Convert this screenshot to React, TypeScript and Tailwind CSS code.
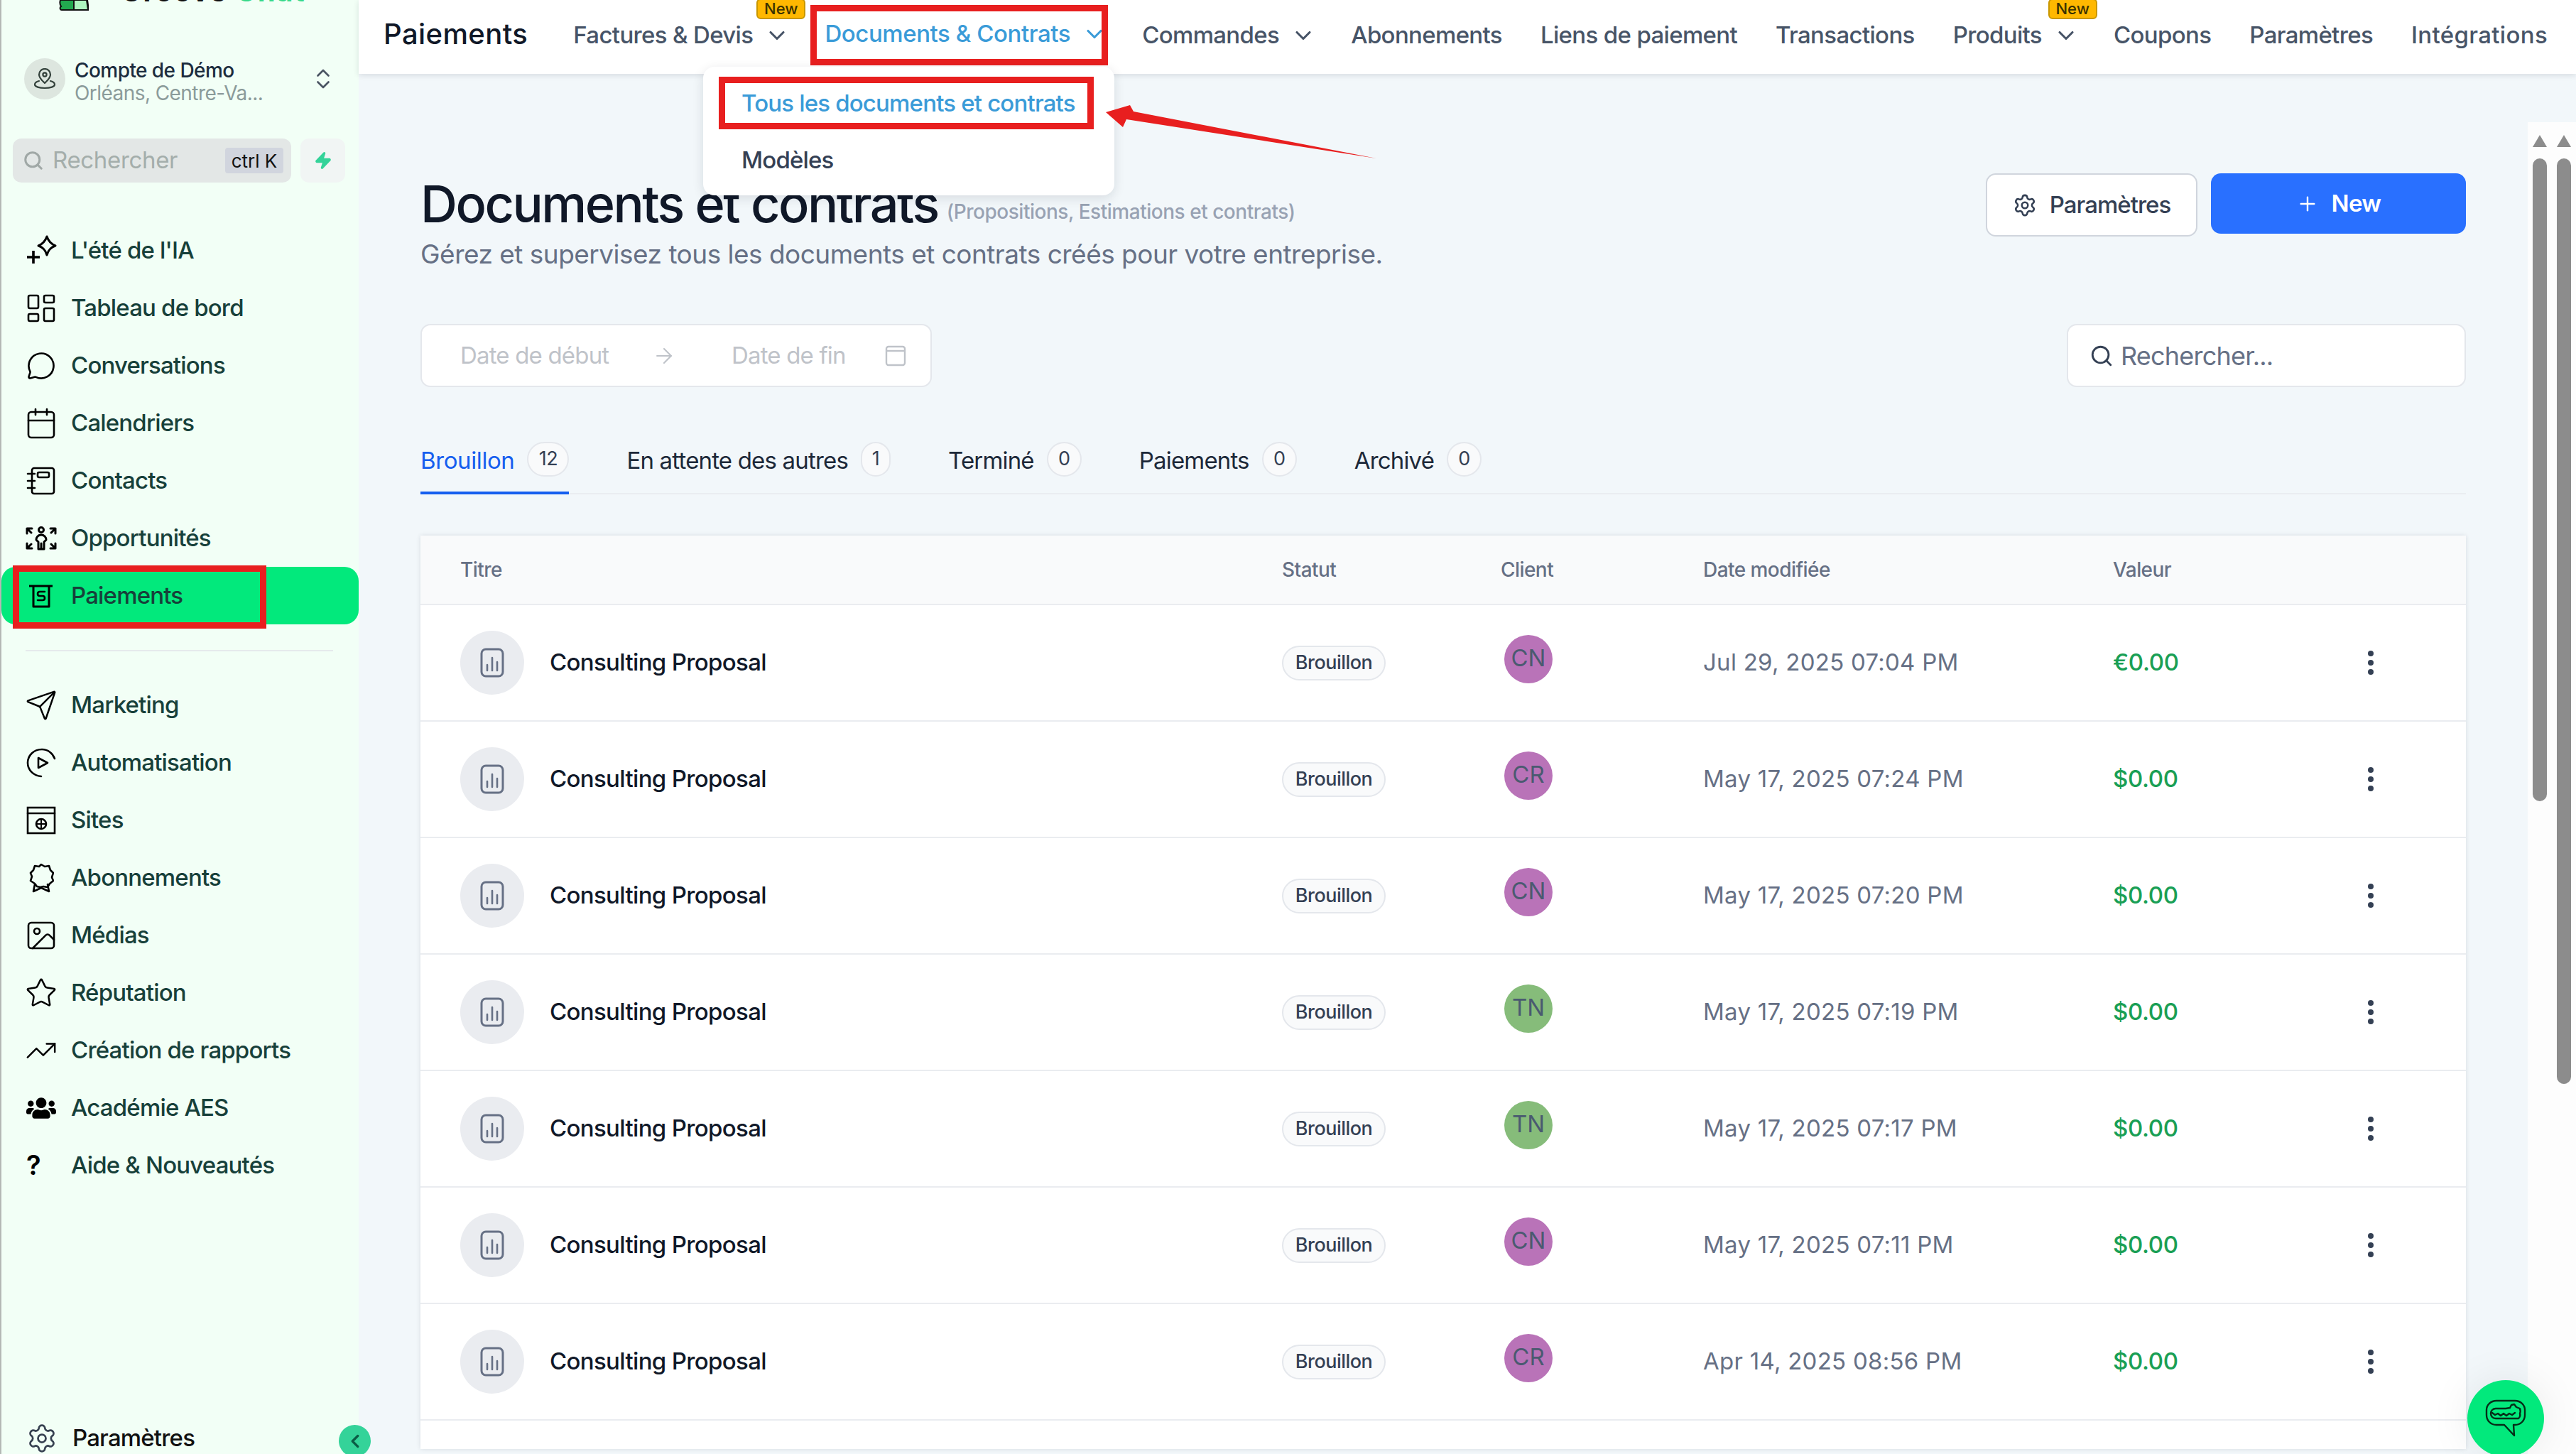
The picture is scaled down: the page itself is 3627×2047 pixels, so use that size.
import { ArrowRight, ChevronDown, ChevronLeft, ChevronsUpDown, LayoutDashboard, MessageCircle, Calendar, Send, Image, Star, TrendingUp, Settings, Plus, Search, Zap } from "lucide-react";
import { FaUsers } from "react-icons/fa";
import type { ReactNode } from "react";

const stroke = { fill: "none", stroke: "#000", strokeWidth: 2.6, strokeLinecap: "round", strokeLinejoin: "round" } as const;

const Sparkle = () => (
  <svg width="46" height="44" viewBox="0 0 46 44" {...stroke} strokeWidth={3}>
    <path d="M31 2c2 6 5 10 12 13-7 2-10 6-12 13-2-7-5-11-12-13 7-3 10-7 12-13z" />
    <path d="M12 22v18M3 31h18" strokeWidth={3.6} strokeLinecap="butt" />
  </svg>
);
const Notebook = () => (
  <svg width="42" height="42" viewBox="0 0 42 42" {...stroke}>
    <rect x="8" y="3" width="31" height="36" rx="3" />
    <rect x="16" y="9" width="16" height="7" rx="2" />
    <path d="M2 11h10M2 21h10M2 31h10" />
  </svg>
);
const Opportunity = () => (
  <svg width="44" height="34" viewBox="0 0 44 34" {...stroke} strokeWidth={3}>
    <circle cx="22" cy="5" r="3.5" />
    <path d="M22 32v-8M15 19c0-4 3-7 7-7s7 3 7 7l-3 3v10h-8V22z" />
    <path d="M2 10V3h7M2 3l6 6M42 10V3h-7M42 3l-6 6M2 24v7h7M2 31l6-6M42 24v7h-7M42 31l-6-6" />
  </svg>
);
const Money = () => (
  <svg width="36" height="34" viewBox="0 0 36 34" {...stroke} strokeWidth={3}>
    <path d="M1 3h33M7 3v29h22V3" strokeLinecap="butt" />
    <path d="M23 11h-7c-4 0-4 6 0 6h4c4 0 4 6 0 6h-7" strokeWidth={2.6} />
  </svg>
);
const Automation = () => (
  <svg width="42" height="42" viewBox="0 0 42 42" {...stroke}>
    <path d="M40 15C37 7 30 2 22 2 10 2 2 11 2 21c0 10 8 18 19 19" />
    <path d="M17 14l13 7-13 7z" />
  </svg>
);
const Site = () => (
  <svg width="42" height="42" viewBox="0 0 42 42" {...stroke}>
    <rect x="2" y="3" width="38" height="36" strokeLinejoin="miter" />
    <path d="M2 11h38" />
    <circle cx="21" cy="26" r="7" />
    <path d="M14 26h14M21 19v14" strokeWidth={2} />
  </svg>
);
const Ribbon = () => (
  <svg width="36" height="42" viewBox="0 0 36 42" {...stroke}>
    <path d="M18 2l5 3 6-1 2 6 4 4-2 6 2 5-5 4-3 5-6-1-4 1-5-1-3-4-6-4 2-6-2-5 4-4 2-6 6 1z" />
    <path d="M9 30l-2 10 11-5 11 5-2-10" />
  </svg>
);
const Gator = () => (
  <svg width="58" height="54" viewBox="0 0 58 54" fill="none" stroke="#062e18" strokeWidth={2.4} strokeLinecap="round" strokeLinejoin="round">
    <path d="M16 2h26c8 0 14 6 14 13v7c0 8-6 14-14 14h-2l1 15-14-15H16C8 36 2 30 2 22v-7C2 8 8 2 16 2z" />
    <path d="M8 20c0-4 3-7 7-7h14l6-1 2-4 4-1 3 4 5 2c1 3 1 5 0 7 1 3 0 5-2 7H15c-4 0-7-3-7-7z" />
    <path d="M10 19l4 3 4-2 4 3 4-3 4 3 4-3 4 2 4-3" />
  </svg>
);
const PinRing = () => (
  <svg width="32" height="30" viewBox="0 0 32 30" fill="none" stroke="#33413b" strokeWidth="2.2" strokeLinecap="round" strokeLinejoin="round">
    <path d="M16 21c-4-4-8-7-8-12a8 8 0 0 1 16 0c0 5-4 8-8 12z" />
    <circle cx="16" cy="9" r="2.6" />
    <path d="M8 18c-4 1-6 3-6 5 0 3 6 5 14 5s14-2 14-5c0-2-2-4-6-5" />
  </svg>
);

type NavRow = { label: string; icon: ReactNode; active?: boolean };

const topNav: NavRow[] = [
  { label: "L'été de l'IA", icon: <Sparkle /> },
  { label: "Tableau de bord", icon: <LayoutDashboard size={48} strokeWidth={1.3} color="#000" /> },
  { label: "Conversations", icon: <MessageCircle size={42} strokeWidth={1.5} color="#000" /> },
  { label: "Calendriers", icon: <Calendar size={48} strokeWidth={1.3} color="#000" /> },
  { label: "Contacts", icon: <Notebook /> },
  { label: "Opportunités", icon: <Opportunity /> },
  { label: "Paiements", icon: <Money />, active: true },
];

const bottomNav: NavRow[] = [
  { label: "Marketing", icon: <Send size={46} strokeWidth={1.3} color="#000" /> },
  { label: "Automatisation", icon: <Automation /> },
  { label: "Sites", icon: <Site /> },
  { label: "Abonnements", icon: <Ribbon /> },
  { label: "Médias", icon: <Image size={48} strokeWidth={1.3} color="#000" /> },
  { label: "Réputation", icon: <Star size={46} strokeWidth={1.3} color="#000" /> },
  { label: "Création de rapports", icon: <TrendingUp size={46} strokeWidth={1.3} color="#000" /> },
  { label: "Académie AES", icon: <FaUsers size={42} color="#000" /> },
  { label: "Aide & Nouveautés", icon: <span className="w-full text-[38px] font-semibold text-black">?</span> },
];

const SideItem = ({ item }: { item: NavRow }) => (
  <div className={`relative flex h-[81px] items-center gap-[21px] rounded-[20px] pl-[35px] ${item.active ? "bg-[#02e97c]" : ""}`}>
    <span className="flex w-[42px] shrink-0 items-center justify-center [&>svg]:shrink-0">{item.icon}</span>
    <span className="text-[33px] font-medium tracking-[-0.025em] text-[#17403a]">{item.label}</span>
    {item.active && <span className="absolute top-[-2px] left-[16px] h-[89px] w-[357px] border-[9px] border-[#e81f1f]" />}
  </div>
);

const Sidebar = () => (
  <aside className="flex h-full w-[505px] shrink-0 flex-col border-l-2 border-[#b4b8b5] bg-[#f2fff6]">
    <div className="flex h-[16px] items-start overflow-hidden pl-[81px]">
      <svg width="42" height="16" viewBox="0 0 42 16" className="shrink-0">
        <path d="M2 0h38l2 14H4c-3 0-3-4-1-5-2-3-2-6-1-9z" fill="#22a84f" stroke="#111" strokeWidth="2" />
        <path d="M21 0h18l2 14H21z" fill="#aef5bf" stroke="#111" strokeWidth="2" />
      </svg>
      <div className="ml-[45px] h-[3px] overflow-hidden">
        <div className="-mt-[32px] text-[40px] leading-[40px] font-bold tracking-[0.04em] whitespace-nowrap text-[#111]">
          Groove <span className="text-[#39d98a]">Chat</span>
        </div>
      </div>
    </div>

    <div className="mt-[66px] flex h-[58px] items-center pr-[32px] pl-[32px]">
      <span className="flex h-[58px] w-[58px] items-center justify-center rounded-full bg-[#dde6df]">
        <PinRing />
      </span>
      <div className="ml-[13px] flex-1 pt-[7px] text-[28px] leading-[32px] tracking-[-0.02em]">
        <div className="font-medium text-[#1b2c3d]">Compte de Démo</div>
        <div className="text-[#8b9b9a]">Orléans, Centre-Va...</div>
      </div>
      <ChevronsUpDown size={36} strokeWidth={1.8} color="#4b5563" />
    </div>

    <div className="mt-[55px] flex h-[62px] gap-[13px] pl-[16px]">
      <div className="flex w-[392px] items-center rounded-[12px] bg-[#e3e7e6] pr-[11px] pl-[14px]">
        <Search size={30} strokeWidth={2.4} color="#a0a8a6" />
        <span className="ml-[12px] flex-1 text-[33px] tracking-[-0.01em] text-[#a4aeab]">Rechercher</span>
        <span className="flex h-[36px] w-[82px] items-center justify-center rounded-[4px] bg-[#d1d5de] text-[26px] text-[#111]">ctrl K</span>
      </div>
      <div className="flex w-[63px] items-center justify-center rounded-[12px] bg-[#f1f5f4]">
        <Zap size={26} fill="#34d399" color="#34d399" />
      </div>
    </div>

    <nav className="mt-[55px]">
      {topNav.map((item) => (
        <SideItem key={item.label} item={item} />
      ))}
    </nav>
    <div className="mt-[36px] mr-[36px] ml-[34px] h-[2px] bg-[#e5eaec]" />
    <nav className="mt-[35px]">
      {bottomNav.map((item) => (
        <SideItem key={item.label} item={item} />
      ))}
    </nav>

    <div className="mt-auto flex h-[44px] items-center gap-[21px] pl-[35px]">
      <Settings size={44} strokeWidth={1.5} color="#374151" />
      <span className="text-[33px] font-medium tracking-[-0.025em] text-[#111]">Paramètres</span>
    </div>
  </aside>
);

const NewBadge = ({ className }: { className: string }) => (
  <span className={`absolute flex h-[29px] w-[69px] items-center justify-center rounded-[6px] border-2 border-[#c99700] bg-[#ffb800] text-[22px] font-medium text-[#3b3200] ${className}`}>
    New
  </span>
);

const TopItem = ({ label, chevron, color = "text-[#475467]", spacing = "tracking-[-0.02em]" }: { label: string; chevron?: boolean; color?: string; spacing?: string }) => (
  <div className={`flex items-center gap-[21px] whitespace-nowrap ${color}`}>
    <span className={`text-[33px] font-medium ${spacing}`}>{label}</span>
    {chevron && <ChevronDown size={36} strokeWidth={2.1} className="-mx-[5px]" />}
  </div>
);

const TopBar = () => (
  <header className="relative z-10 flex h-[104px] shrink-0 items-center bg-white pb-[4px] pl-[35px] shadow-[0_2px_8px_rgba(16,24,40,0.12)]">
    <span className="mr-[64px] mb-[4px] text-[40px] font-medium tracking-[0.01em] text-[#101828]">Paiements</span>
    <div className="flex items-center gap-[54px]">
      <div className="relative">
        <TopItem label="Factures & Devis" chevron />
        <NewBadge className="top-[-27px] left-[258px]" />
      </div>
      <div className="relative mb-[4px]">
        <TopItem label="Documents & Contrats" chevron color="text-[#3a9bd8]" spacing="tracking-[-0.013em]" />
        <span className="absolute top-[-16px] left-[-20px] h-[85px] w-[419px] border-[9px] border-[#e81f1f]" />
      </div>
      <TopItem label="Commandes" chevron />
      <TopItem label="Abonnements" />
      <TopItem label="Liens de paiement" />
      <TopItem label="Transactions" />
      <div className="relative">
        <TopItem label="Produits" chevron />
        <NewBadge className="top-[-27px] left-[134px]" />
      </div>
      <TopItem label="Coupons" />
      <TopItem label="Paramètres" />
      <TopItem label="Intégrations" spacing="tracking-[0.01em]" />
    </div>
  </header>
);

const DropMenu = () => (
  <div className="absolute top-[94px] left-[990px] z-20 flex h-[181px] w-[579px] flex-col rounded-[16px] bg-white pt-[14px] pl-[54px] text-[33px] font-medium tracking-[-0.025em] shadow-[0_4px_16px_rgba(16,24,40,0.12)]">
    <div className="flex h-[76px] items-center text-[#3a9bd8]">Tous les documents et contrats</div>
    <div className="mt-[4px] flex h-[76px] items-center text-[#344054]">Modèles</div>
    <span className="absolute top-[14px] left-[22px] h-[74px] w-[528px] border-[9px] border-[#e81f1f]" />
  </div>
);

const tabs = [
  { label: "Brouillon", count: 12, active: true },
  { label: "En attente des autres", count: 1 },
  { label: "Terminé", count: 0 },
  { label: "Paiements", count: 0 },
  { label: "Archivé", count: 0 },
];

const rows = [
  { who: "CN", date: "Jul 29, 2025 07:04 PM", value: "€0.00" },
  { who: "CR", date: "May 17, 2025 07:24 PM", value: "$0.00" },
  { who: "CN", date: "May 17, 2025 07:20 PM", value: "$0.00" },
  { who: "TN", date: "May 17, 2025 07:19 PM", value: "$0.00" },
  { who: "TN", date: "May 17, 2025 07:17 PM", value: "$0.00" },
  { who: "CN", date: "May 17, 2025 07:11 PM", value: "$0.00" },
  { who: "CR", date: "Apr 14, 2025 08:56 PM", value: "$0.00" },
];

const DocIcon = () => (
  <svg width="34" height="42" viewBox="0 0 34 42" fill="none" stroke="#667085" strokeLinecap="round">
    <rect x="2" y="2" width="30" height="38" rx="6" strokeWidth="3" />
    <path d="M10 24v8M17 14v18M24 20v12" strokeWidth="2.6" />
  </svg>
);

const Table = () => (
  <div className="mt-[58px] min-h-0 flex-1 overflow-hidden bg-white shadow-[0_0_6px_rgba(16,24,40,0.12)]">
    <div className="grid h-[98px] grid-cols-[1157px_308px_285px_577px_363px_1fr] items-center border-b-2 border-[#eaecf0] bg-[#f9fafb] pl-[56px] text-[28px] font-medium tracking-[-0.02em] text-[#667085]">
      <span>Titre</span>
      <span>Statut</span>
      <span>Client</span>
      <span>Date modifiée</span>
      <span>Valeur</span>
    </div>
    {rows.map((row, i) => (
      <div key={i} className="grid h-[164px] grid-cols-[1157px_308px_285px_577px_363px_1fr] items-center border-b-2 border-[#eaecf0] pl-[56px]">
        <div className="flex items-center gap-[36px]">
          <span className="flex h-[90px] w-[90px] items-center justify-center rounded-full bg-[#eaecf0]">
            <DocIcon />
          </span>
          <span className="text-[33px] font-medium tracking-[-0.02em] text-[#101828]">Consulting Proposal</span>
        </div>
        <span className="flex h-[49px] w-[146px] items-center justify-center rounded-full border-2 border-[#e4e7ec] bg-[#f9fafb] text-[27px] font-medium tracking-[-0.02em] text-[#344054]">
          Brouillon
        </span>
        <span
          className={`mb-[10px] ml-[5px] flex h-[68px] w-[68px] items-center justify-center rounded-full pb-[3px] text-[33px] text-[#4a5a70] ${
            row.who === "TN" ? "bg-[#86bc7a]" : "bg-[#b973b8]"
          }`}
        >
          {row.who}
        </span>
        <span className="text-[33px] tracking-[0.008em] text-[#667085]">{row.date}</span>
        <span className="text-[33px] font-medium tracking-[-0.01em] text-[#1a9f55]">{row.value}</span>
        <span className="-ml-[4px] flex w-[8px] flex-col gap-[5px]">
          <i className="h-[8px] w-[8px] rounded-full bg-[#344054]" />
          <i className="h-[8px] w-[8px] rounded-full bg-[#344054]" />
          <i className="h-[8px] w-[8px] rounded-full bg-[#344054]" />
        </span>
      </div>
    ))}
  </div>
);

const Content = () => (
  <section className="flex min-w-0 flex-1 flex-col pb-[7px] pl-[87px]">
    <div className="flex h-[352px] shrink-0 items-start justify-between pt-[140px]">
      <div>
        <div className="flex items-start gap-[12px]">
          <h1 className="text-[72px] leading-[86px] font-medium tracking-[-0.035em] whitespace-nowrap text-[#101828]">Documents et contrats</h1>
          <span className="mt-[33px] text-[28px] leading-[42px] font-medium tracking-[-0.017em] whitespace-nowrap text-[#98a2b3]">(Propositions, Estimations et contrats)</span>
        </div>
        <p className="mt-[6px] text-[37px] leading-[44px] tracking-[-0.014em] text-[#667085]">
          Gérez et supervisez tous les documents et contrats créés pour votre entreprise.
        </p>
      </div>
      <div className="flex gap-[19px]">
        <button className="flex h-[89px] w-[298px] items-center justify-center gap-[18px] rounded-[14px] border-2 border-[#d0d5dd] bg-white text-[33px] font-medium tracking-[-0.03em] text-[#344054]">
          <Settings size={34} strokeWidth={1.8} />
          Paramètres
        </button>
        <button className="flex h-[85px] w-[359px] items-center justify-center gap-[18px] rounded-[14px] bg-[#2970ff] text-[33px] font-semibold tracking-[-0.02em] text-white">
          <Plus size={32} strokeWidth={1.8} />
          New
        </button>
      </div>
    </div>

    <div className="flex h-[89px] shrink-0 justify-between">
      <div className="flex w-[720px] items-center rounded-[14px] border-2 border-[#e4e7ec] bg-white text-[33px] tracking-[-0.025em] whitespace-nowrap text-[#bfc3c9]">
        <span className="ml-[54px] w-[213px]">Date de début</span>
        <ArrowRight size={34} strokeWidth={1.5} className="ml-[57px]" />
        <span className="ml-[78px] w-[158px]">Date de fin</span>
        <svg width="30" height="30" viewBox="0 0 30 30" fill="none" stroke="#bfc3c9" strokeWidth="2.4" className="ml-[58px]">
          <rect x="2" y="2" width="26" height="26" rx="3" />
          <path d="M2 8h26" />
        </svg>
      </div>
      <div className="flex w-[562px] items-center rounded-[14px] border-2 border-[#e4e7ec] bg-white pl-[30px]">
        <Search size={34} strokeWidth={2} color="#344054" />
        <span className="ml-[10px] text-[36px] tracking-[-0.022em] text-[#667085]">Rechercher...</span>
      </div>
    </div>

    <div className="mt-[77px] flex h-[74px] shrink-0 gap-[81px] border-b-[2px] border-[#eaedf1]">
      {tabs.map((tab) => (
        <div
          key={tab.label}
          className={`flex h-[74px] items-start gap-[18px] ${tab.active ? "border-b-4 border-[#155eef]" : ""}`}
        >
          <span className={`text-[33px] leading-[52px] ${tab.active ? "tracking-[-0.012em] text-[#155eef]" : "font-normal tracking-[-0.025em] text-[#1d2939]"}`}>
            {tab.label}
          </span>
          <span className={`flex h-[49px] items-center justify-center rounded-full border-2 border-[#e4e7ec] bg-[#f9fafb] text-[27px] tracking-[-0.02em] text-[#344054] ${tab.count > 9 ? "w-[59px]" : tab.count === 1 ? "w-[42px]" : "w-[49px]"}`}>
            {tab.count}
          </span>
        </div>
      ))}
    </div>

    <Table />
  </section>
);

const ScrollStrip = () => (
  <div className="mt-[68px] flex h-full w-[68px] shrink-0 justify-center gap-[14px] bg-[#fdfdfd] pt-[18px]">
    {[905, 1303].map((h) => (
      <div key={h} className="flex w-[20px] flex-col items-center gap-[16px]">
        <span className="h-0 w-0 border-x-[10px] border-b-[17px] border-x-transparent border-b-[#8c8c8c]" />
        <span className="w-[20px] rounded-full bg-[#8c8c8c]" style={{ height: h }} />
      </div>
    ))}
  </div>
);

export default function App() {
  return (
    <div className="relative flex h-screen w-screen overflow-hidden bg-[#f2f7fa] font-['Inter',sans-serif]">
      <Sidebar />
      <main className="flex min-w-0 flex-1 flex-col">
        <TopBar />
        <div className="flex min-h-0 flex-1 gap-[87px]">
          <Content />
          <ScrollStrip />
        </div>
      </main>

      <DropMenu />
      <svg width="400" height="90" viewBox="0 0 400 90" className="absolute top-[145px] left-[1550px] z-30">
        <path d="M7 13L41 3l5 9 342 66-352-55-5 11z" fill="#e81f1f" />
      </svg>

      <button className="absolute top-[2006px] left-[477px] z-30 flex h-[45px] w-[45px] items-center justify-center rounded-full bg-[#34d399]">
        <ChevronLeft size={30} strokeWidth={2.6} color="#0b5c45" />
      </button>
      <button className="absolute top-[1943px] left-[3474px] z-30 flex h-[108px] w-[108px] items-center justify-center rounded-full bg-[#02e97c] shadow-[0_0_60px_rgba(0,0,0,0.08)]">
        <Gator />
      </button>
    </div>
  );
}
